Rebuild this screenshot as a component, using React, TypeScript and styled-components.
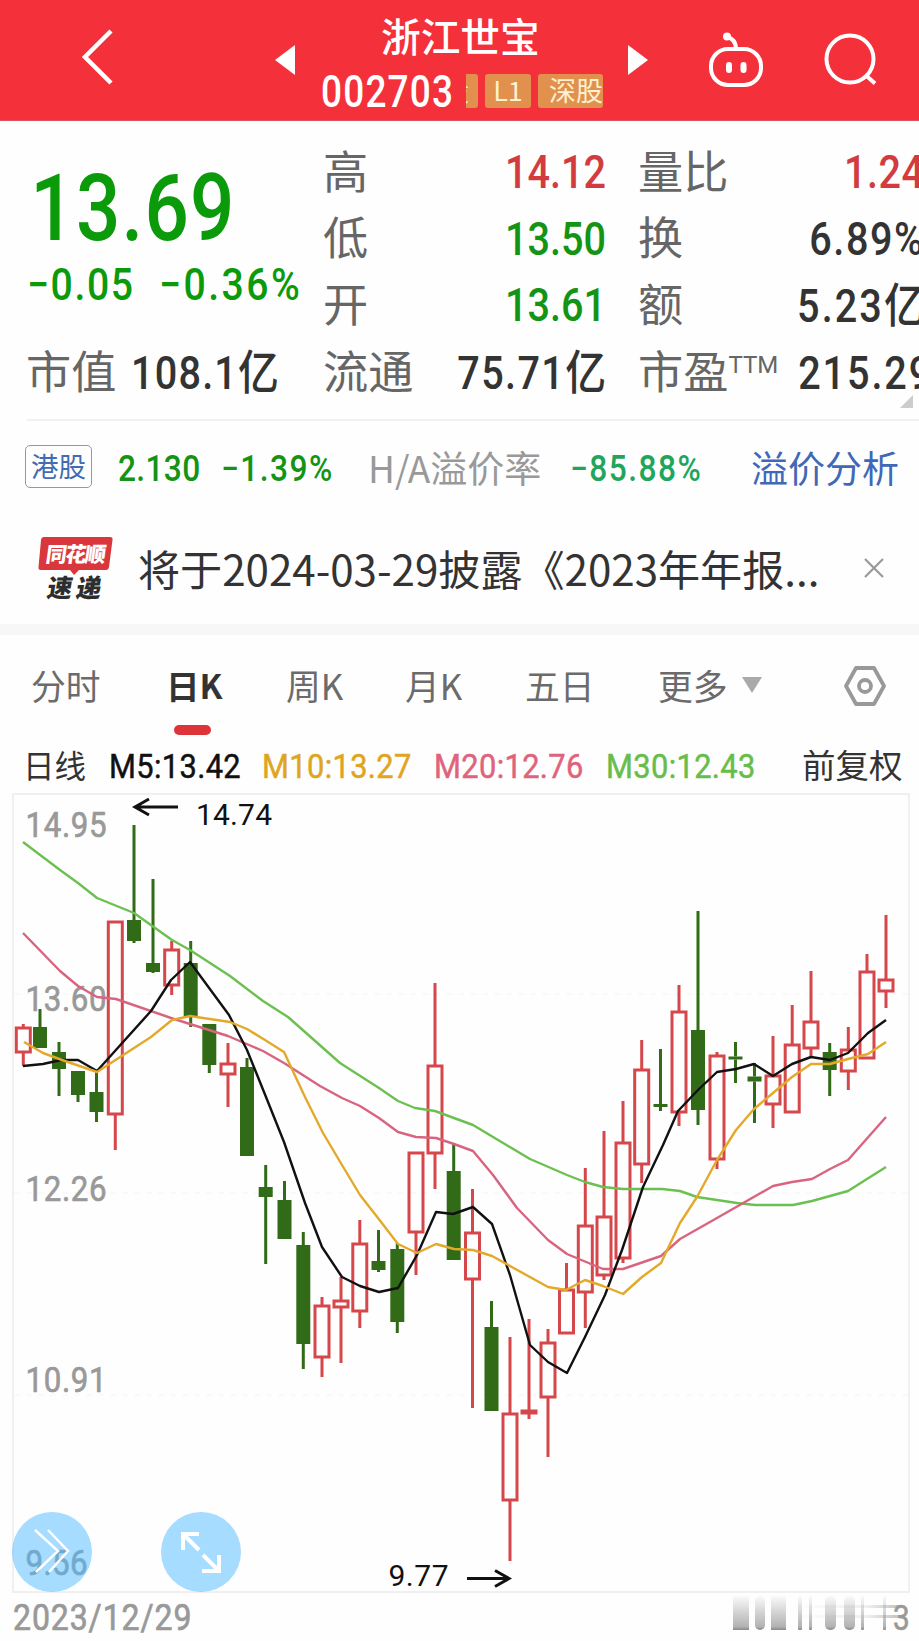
import React from 'react';
import styled, { createGlobalStyle } from 'styled-components';

const GlobalStyle = createGlobalStyle`
  * { box-sizing: border-box; }
  body { margin: 0; background: #fff; overflow: hidden; }
`;

const NUM = `'Roboto', 'Noto Sans CJK SC', sans-serif`;
const CJK = `'Noto Sans CJK SC', sans-serif`;

const Page = styled.main`
  width: 919px;
  height: 1641px;
  overflow: hidden;
  background: #fefefe;
  font-family: ${CJK};
  color: #333;
`;

const Header = styled.header`
  display: flex;
  height: 121px;
  background: #f4303a;
  border-bottom: 1px solid #d9545a;
  color: #fff;
`;
const BackSlot = styled.div`
  width: 275px;
  padding: 29px 0 0 80px;
`;
const ArrowSlot = styled.div<{ $w: number }>`
  width: ${(p) => p.$w}px;
  padding-top: 45px;
`;
const TitleBlock = styled.div`
  width: 333px;
  padding: 11px 0 0 26px;
`;
const Title = styled.h1`
  margin: 0 0 0 60px;
  font: 500 39.7px/48px ${CJK};
  white-space: nowrap;
`;
const CodeRow = styled.div`
  display: flex;
  align-items: center;
  height: 64px;
`;
const Code = styled.span`
  width: 145px;
  padding-top: 3px;
  font: 500 43.5px/60px ${NUM};
  letter-spacing: 1.4px;
  transform: scaleX(0.85);
  transform-origin: left;
`;
const Tag = styled.span<{ $w: number; $cut?: boolean; $align?: string }>`
  width: ${(p) => p.$w}px;
  height: 34px;
  margin-right: 7px;
  background: #e2904e;
  border-radius: ${(p) => (p.$cut ? '0 3px 3px 0' : '3px')};
  color: #fdf1cf;
  font: 400 27px/32px ${CJK};
  text-align: ${(p) => p.$align || 'center'};
  overflow: hidden;
  white-space: nowrap;
  flex: none;
  & > i { display: block; width: 27px; font-style: normal; margin-left: -24px; }
`;
const RobotSlot = styled.div`
  width: 118px;
  padding: 32px 0 0 57px;
`;
const SearchSlot = styled.div`
  padding: 31px 0 0 55px;
`;

const Quote = styled.section`
  display: grid;
  grid-template-columns: 297px 282px 319px;
  grid-template-rows: 67px 66px 67px 68px;
  height: 300px;
  margin-left: 27px;
  padding-top: 15px;
  border-bottom: 2px solid #f1f1f1;
  position: relative;
`;
const PriceBlock = styled.div`
  grid-row: 1 / span 3;
  color: #0a9a0a;
  font-family: ${NUM};
  font-weight: 500;
`;
const Price = styled.div`
  padding: 21px 0 0 4px;
  font-size: 93px;
  line-height: 104px;
  letter-spacing: 1.4px;
  transform: scaleX(0.84);
  transform-origin: left;
`;
const Changes = styled.div`
  display: flex;
  font-size: 44.5px;
  line-height: 48px;
  letter-spacing: 2px;
  white-space: nowrap;
`;
const Change = styled.span<{ $ls?: number }>`
  width: 132px;
  letter-spacing: ${(p) => p.$ls || 1.8}px;
  transform: scaleX(0.88);
  transform-origin: left;
`;
const Cell = styled.div<{ $third?: boolean }>`
  display: flex;
  align-items: center;
  justify-content: space-between;
  white-space: nowrap;
  ${(p) => p.$third && 'margin-left: 33px;'}
`;
const Label = styled.span`
  margin-left: -1px;
  font: 400 45.2px/60px ${CJK};
  color: #666;
  sup { position: relative; top: -16px; font: 400 24px/1 ${NUM}; vertical-align: baseline; letter-spacing: 0; }
`;
const Value = styled.span<{ $c?: string; $left?: boolean; $ls?: number }>`
  padding-top: 7px;
  font: 500 45.5px/60px ${NUM};
  letter-spacing: ${(p) => p.$ls ?? 1.8}px;
  color: ${(p) => p.$c || '#333'};
  transform: scaleX(0.87);
  transform-origin: ${(p) => (p.$left ? 'left' : 'right')};
  em { font-style: normal; font-size: 47px; letter-spacing: 0; }
`;
const FirstCell = styled(Cell)`
  justify-content: flex-start;
  gap: 15px;
`;
const Corner = styled.svg`
  position: absolute;
  right: 6px;
  bottom: 11px;
`;

const HkRow = styled.section`
  display: flex;
  align-items: center;
  height: 91px;
  padding-left: 25px;
  white-space: nowrap;
`;
const HkBadge = styled.span`
  width: 67px;
  height: 43px;
  border: 1.5px solid #7f9cc9;
  border-radius: 5px;
  color: #426bb0;
  font: 400 27.5px/39px ${CJK};
  text-align: center;
`;
const HkNum = styled.span<{ $w: number; $c: string; $ml: number; $ls: number }>`
  width: ${(p) => p.$w}px;
  margin-left: ${(p) => p.$ml}px;
  padding-top: 4px;
  font: 500 36px/50px ${NUM};
  letter-spacing: ${(p) => p.$ls}px;
  color: ${(p) => p.$c};
  transform: scaleX(0.88);
  transform-origin: left;
`;
const HkLabel = styled.span<{ $w: number; $ml: number; $c: string }>`
  width: ${(p) => p.$w}px;
  margin-left: ${(p) => p.$ml}px;
  font: 400 37px/50px ${CJK};
  color: ${(p) => p.$c};
`;

const News = styled.section`
  display: flex;
  align-items: center;
  height: 112px;
  padding-left: 38px;
`;
const NewsText = styled.p`
  width: 690px;
  margin: 0 0 0 24px;
  font: 400 42.1px/60px ${CJK};
  white-space: nowrap;
`;
const CloseIcon = styled.svg`
  margin-left: 36px;
`;
const Gap = styled.div`
  height: 11px;
  background: #f7f7f7;
`;

const Tabs = styled.nav`
  display: flex;
  height: 106px;
  padding: 28px 0 0 31px;
`;
const Tab = styled.div<{ $w: number; $on?: boolean }>`
  width: ${(p) => p.$w}px;
  font: ${(p) => (p.$on ? '700 33.5px' : '400 34.8px')}/44px ${CJK};
  color: ${(p) => (p.$on ? '#333' : '#6b6b6b')};
  white-space: nowrap;
  ${(p) => p.$on && 'text-indent: -2px;'}
  &::after {
    content: '';
    display: ${(p) => (p.$on ? 'block' : 'none')};
    width: 37px;
    height: 10px;
    margin: 18px 0 0 6px;
    border-radius: 5px;
    background: #dc3439;
  }
`;
const Caret = styled.svg`
  margin: 14px 82px 0 0;
`;

const Averages = styled.section`
  display: flex;
  align-items: center;
  height: 52px;
  padding-left: 23px;
  font: 400 31.5px/50px ${CJK};
  white-space: nowrap;
`;
const Word = styled.span<{ $w: number; $s?: number }>`
  width: ${(p) => p.$w}px;
  padding-bottom: 6px;
  font-size: ${(p) => p.$s || 31.5}px;
`;
const Avg = styled.span<{ $w: number; $c: string }>`
  width: ${(p) => p.$w}px;
  font: 400 33.5px/50px ${NUM};
  letter-spacing: 0.4px;
  -webkit-text-stroke: 0.5px ${(p) => p.$c};
  color: ${(p) => p.$c};
  transform: scaleX(0.92);
  transform-origin: left;
`;

const ChartArea = styled.section`
  position: relative;
  height: 800px;
`;
const Chart = styled.svg`
  display: block;
`;
const RoundButton = styled.button<{ $x: number }>`
  position: absolute;
  left: ${(p) => p.$x}px;
  top: 719px;
  width: 80px;
  height: 80px;
  padding: 0;
  border: 0;
  border-radius: 50%;
  background: rgba(75, 185, 255, 0.5);
`;
const Footer = styled.footer`
  display: flex;
  justify-content: space-between;
  height: 48px;
  padding-left: 13px;
  font: 400 36px/50px ${NUM};
  color: #999;
`;
const StartDate = styled.span`
  letter-spacing: 1px;
  -webkit-text-stroke: 0.7px #999;
  transform: scaleX(0.89);
  transform-origin: left;
`;

type Candle = [x: number, top: number, bottom: number, high: number, low: number, up: 0 | 1];
const candles: Candle[] = [
  [23.3, 1028, 1052, 1024, 1066, 1], [40, 1027, 1048, 1009, 1048, 0], [59, 1052, 1069, 1042, 1096, 0],
  [78, 1071, 1095, 1071, 1102, 0], [96.5, 1092, 1112, 1071, 1122, 0], [115.3, 922, 1114, 922, 1150, 1],
  [134, 920, 941, 825, 943, 0], [153, 963, 972, 879, 973, 0], [171.7, 950, 985, 941, 995, 1],
  [190.7, 963, 1017, 941, 1027, 0], [209.3, 1024, 1065, 1024, 1073, 0], [228, 1064, 1074, 1043, 1107, 1],
  [247, 1067, 1156, 1058, 1156, 0], [265.7, 1187, 1197, 1165, 1264, 0], [284.5, 1200, 1239, 1181, 1239, 0],
  [303.3, 1245, 1344, 1232, 1369, 0], [322, 1306, 1357, 1297, 1377, 1], [341, 1301, 1307, 1277, 1363, 1],
  [359.8, 1244, 1311, 1220, 1328, 1], [378.5, 1261, 1270, 1230, 1272, 0], [397.3, 1249, 1322, 1243, 1333, 0],
  [416, 1153, 1232, 1153, 1275, 1], [435, 1066, 1153, 983, 1189, 1], [453.7, 1171, 1260, 1143, 1260, 0],
  [472.5, 1233, 1279, 1189, 1408, 1], [491.5, 1327, 1411, 1301, 1411, 0], [510, 1414, 1500, 1337, 1561, 1],
  [529, 1411, 1413, 1319, 1419, 1], [548, 1343, 1397, 1329, 1457, 1], [566.5, 1290, 1333, 1263, 1333, 1],
  [585.3, 1226, 1292, 1168, 1328, 1], [604, 1217, 1275, 1131, 1280, 1], [623, 1143, 1258, 1101, 1263, 1],
  [641.7, 1070, 1164, 1040, 1183, 1], [660.5, 1104, 1107, 1049, 1111, 0], [679, 1012, 1112, 985, 1126, 1],
  [698, 1030, 1110, 911, 1125, 0], [717, 1056, 1159, 1052, 1169, 1], [735.5, 1056.5, 1059.5, 1042, 1083, 0],
  [754.5, 1076.5, 1081.5, 1063, 1123, 0], [773, 1076, 1104, 1036, 1128, 1], [792.2, 1045, 1112, 1005, 1112, 1],
  [811, 1022, 1048, 971, 1056, 1], [829.7, 1052, 1070, 1043, 1096, 0], [848.3, 1050, 1071, 1027, 1090, 1],
  [867, 972, 1058, 954, 1058, 1], [886, 980, 991, 915, 1008, 1],
];

const averages: { color: string; points: string }[] = [
  { color: '#6cc04f', points: '23,842 60,870 78,883 97,898 134,913 172,940 190,950 230,976 263,1001 288,1017 340,1063 379,1088 398,1101 415,1108 435,1111 473,1125 530,1159 567,1175 585,1182 603,1187 623,1189 662,1189 680,1191 697,1197 737,1203 755,1205 793,1205 812,1201 830,1196 848,1191 886,1167' },
  { color: '#d9647f', points: '23,933 60,971 78,986 97,997 116,999 171,1018 228,1036 263,1051 284,1063 320,1086 342,1098 360,1106 379,1118 398,1132 416,1137 436,1138 454,1144 473,1151 493,1175 517,1208 548,1240 567,1254 603,1269 623,1269 661,1256 680,1239 717,1218 773,1186 792,1182 812,1179 830,1169 848,1160 886,1117' },
  { color: '#111', points: '23,1066 43,1064 61,1060 78,1060 97,1071 151,1011 171,980 190,962 229,1015 247,1050 266,1097 284,1142 305,1203 322,1247 342,1277 360,1286 379,1292 398,1288 417,1255 436,1212 453,1214 473,1207 492,1224 510,1275 530,1345 548,1362 567,1373 585,1337 605,1295 622,1250 643,1187 663,1145 678,1111 698,1090 717,1072 736,1069 754,1064 773,1076 792,1064 811,1057 830,1060 848,1053 868,1033 886,1020' },
  { color: '#e3a92a', points: '24,1042 43,1053 62,1060 97,1072 151,1037 172,1020 190,1016 230,1022 247,1029 265,1040 284,1052 305,1097 323,1133 342,1165 360,1195 378,1218 398,1244 417,1253 436,1244 454,1249 473,1250 492,1256 548,1287 566,1290 585,1280 603,1286 623,1294 642,1277 661,1263 680,1223 697,1197 717,1160 736,1130 754,1109 773,1093 792,1077 811,1064 830,1064 848,1059 868,1054 886,1042' },
];

const axis: [string, number, number][] = [
  ['14.95', 837, 79], ['13.60', 1011, 79], ['12.26', 1201, 79], ['10.91', 1392, 79], ['9.56', 1575, 60],
];

function CandleMark({ c }: { c: Candle }) {
  const [x, t, b, h, l, up] = c;
  const color = up ? '#d5474b' : '#316b18';
  return (
    <g stroke={color} strokeWidth={3}>
      {h < t && <line x1={x} x2={x} y1={h} y2={t} />}
      {l > b && <line x1={x} x2={x} y1={b} y2={l} />}
      {up ? (
        <rect x={x - 7} y={t} width={14} height={b - t} fill="none" />
      ) : (
        <rect x={x - 7} y={t} width={14} height={b - t} fill={color} stroke="none" />
      )}
    </g>
  );
}

function KLine() {
  return (
    <Chart width="919" height="800" viewBox="0 793 919 800">
      <g stroke="#f0f0f0" strokeWidth="2" fill="none">
        <rect x="13" y="794" width="896" height="798" />
        <path d="M14 994H908M14 1193H908M14 1395H908" stroke="#f5f5f5" strokeWidth="1" strokeDasharray="6 6" />
      </g>
      <g fill="#999" fontFamily="Roboto, sans-serif" fontSize="35.500" stroke="#999" strokeWidth=".7">
        {axis.map(([t, y, w]) => (
          <text key={t} transform={`translate(25.500 ${y}) scale(.88 1)`} textLength={(w + 2) / 0.88}>{t}</text>
        ))}
      </g>
      {candles.map((c) => <CandleMark key={c[0]} c={c} />)}
      {averages.map((a) => (
        <polyline key={a.color} points={a.points} fill="none" stroke={a.color} strokeWidth="2.400" strokeLinejoin="round" />
      ))}
      <g fill="none" stroke="#111" strokeWidth="3">
        <path d="M178 807H136M149 799L135 807L149 815" />
        <path d="M467 1578.500H508M495 1570.500L509 1578.500L495 1586.500" />
      </g>
      <g fill="#111" fontFamily="Roboto, sans-serif" fontSize="30">
        <text x="196" y="825" textLength="76">14.74</text>
        <text x="388.500" y="1586" textLength="60">9.77</text>
      </g>
    </Chart>
  );
}

function BrandMark() {
  return (
    <svg width="76" height="66" viewBox="0 0 76 66">
      <path d="M6 2H72Q75 2 74.500 5L71 32Q70.500 35 68 35H41L36 40L32 35H3Q0 35 .5 32L3 5Q3.500 2 6 2Z" fill="#d9373b" />
      <g fontFamily="Noto Sans CJK SC, sans-serif" fontWeight="900" fontSize="21">
        <text transform="translate(7 27) skewX(-8)" fill="#fff" textLength="60">同花顺</text>
        <text transform="translate(8 62) skewX(-10)" fill="#2d2d2d" fontSize="25" textLength="54">速递</text>
      </g>
    </svg>
  );
}

function DateRemnant() {
  const bars: [number, number, number][] = [[33, 16, 0], [55, 10, 5], [71, 15, 0], [98, 4, 1], [109, 3, 1], [125, 11, 5], [144, 11, 5], [161, 3, 1], [183, 3, 1]];
  return (
    <svg width="219" height="48" viewBox="0 0 219 48">
      <defs>
        <linearGradient id="fade" x1="0" y1="0" x2="0" y2="1">
          <stop offset="0" stopColor="#999" stopOpacity="0.04" />
          <stop offset=".9" stopColor="#999" stopOpacity=".75" />
          <stop offset="1" stopColor="#888" />
        </linearGradient>
        <linearGradient id="trail" x1="0" y1="0" x2="1" y2="0">
          <stop offset="0" stopColor="#aaa" stopOpacity="0" />
          <stop offset=".7" stopColor="#999" stopOpacity=".15" />
          <stop offset="1" stopColor="#999" stopOpacity=".6" />
        </linearGradient>
      </defs>
      {bars.map(([x, w, r]) => <rect key={x} x={x} y="3" width={w} height="34" rx={r} fill="url(#fade)" />)}
      <rect x="90" y="12" width="110" height="3" fill="url(#trail)" />
      <rect x="90" y="22" width="110" height="3" fill="url(#trail)" />
      <text transform="translate(193 37) scale(.85 1)" fontFamily="Roboto, sans-serif" fontSize="35" fill="#999" stroke="#999" strokeWidth=".6">3</text>
    </svg>
  );
}

const GREEN = '#149414';
const RED = '#d23c40';

export default function App() {
  return (
    <Page>
      <GlobalStyle />
      <Header>
        <BackSlot>
          <svg width="34" height="58" fill="none" stroke="#fff" strokeWidth="4.500"><path d="M31 2L5 28L31 54" /></svg>
        </BackSlot>
        <ArrowSlot $w={20}><svg width="20" height="30" fill="#fff"><path d="M20 0V30L0 15Z" /></svg></ArrowSlot>
        <TitleBlock>
          <Title>浙江世宝</Title>
          <CodeRow>
            <Code>002703</Code>
            <Tag $w={12} $cut><i>股</i></Tag>
            <Tag $w={46}>L1</Tag>
            <Tag $w={65} $align="right">深股</Tag>
          </CodeRow>
        </TitleBlock>
        <ArrowSlot $w={20}><svg width="20" height="30" fill="#fff"><path d="M0 0V30L20 15Z" /></svg></ArrowSlot>
        <RobotSlot>
          <svg width="60" height="58" viewBox="705 33 60 58" fill="none" stroke="#fff" strokeWidth="4">
            <rect x="711" y="50" width="50" height="36" rx="17" />
            <path d="M736 50Q736 40 727 38" strokeWidth="4" /><circle cx="727" cy="37.500" r="2" fill="#fff" />
            <path d="M729 66V71M743.500 66V71" strokeWidth="6" strokeLinecap="round" />
          </svg>
        </RobotSlot>
        <SearchSlot>
          <svg width="60" height="58" viewBox="821 31 60 58" fill="none" stroke="#fff" strokeWidth="4">
            <circle cx="850" cy="59" r="23.500" /><path d="M865 74.500L875 83.500" />
          </svg>
        </SearchSlot>
      </Header>

      <Quote>
        <PriceBlock>
          <Price>13.69</Price>
          <Changes><Change>−0.05</Change><Change $ls={2.8}>−0.36%</Change></Changes>
        </PriceBlock>
        <Cell><Label>高</Label><Value $c={RED} $ls={0}>14.12</Value></Cell>
        <Cell $third><Label>量比</Label><Value $c={RED} $ls={0.6}>1.24</Value></Cell>
        <Cell><Label>低</Label><Value $c={GREEN} $ls={0}>13.50</Value></Cell>
        <Cell $third><Label>换</Label><Value>6.89%</Value></Cell>
        <Cell><Label>开</Label><Value $c={GREEN} $ls={0}>13.61</Value></Cell>
        <Cell $third><Label>额</Label><Value $ls={2.4}>5.23<em>亿</em></Value></Cell>
        <FirstCell><Label>市值</Label><Value $left $ls={1.4}>108.1<em>亿</em></Value></FirstCell>
        <Cell><Label>流通</Label><Value $ls={1.6}>75.71<em>亿</em></Value></Cell>
        <Cell $third><Label>市盈<sup>TTM</sup></Label><Value $ls={2.2}>215.29</Value></Cell>
        <Corner width="13" height="13" fill="#ccc"><path d="M13 0V13H0Z" /></Corner>
      </Quote>

      <HkRow>
        <HkBadge>港股</HkBadge>
        <HkNum $w={90} $ml={26} $ls={0.4} $c="#149414">2.130</HkNum>
        <HkNum $w={120} $ml={13} $ls={1.7} $c="#149414">−1.39%</HkNum>
        <HkLabel $w={180} $ml={27} $c="#999">H/A溢价率</HkLabel>
        <HkNum $w={140} $ml={22} $ls={1.7} $c="#1fa65c">−85.88%</HkNum>
        <HkLabel $w={150} $ml={41} $c="#3f68b8">溢价分析</HkLabel>
      </HkRow>

      <News>
        <BrandMark />
        <NewsText>将于2024-03-29披露《2023年年报...</NewsText>
        <CloseIcon width="20" height="20" stroke="#999" strokeWidth="2.200"><path d="M1 1L19 19M19 1L1 19" /></CloseIcon>
      </News>
      <Gap />

      <Tabs>
        <Tab $w={137}>分时</Tab>
        <Tab $w={118} $on>日K</Tab>
        <Tab $w={119}>周K</Tab>
        <Tab $w={120}>月K</Tab>
        <Tab $w={133}>五日</Tab>
        <Tab $w={84}>更多</Tab>
        <Caret width="20" height="16" fill="#aaa"><path d="M0 0H20L10 16Z" /></Caret>
        <svg width="44" height="46" viewBox="0 0 44 46" fill="none" stroke="#999" strokeWidth="3.800" strokeLinejoin="round">
          <path d="M12 5H30L40 23L30 41H12L2 23Z" /><circle cx="21" cy="23" r="6" />
        </svg>
      </Tabs>

      <Averages>
        <Word $w={86}>日线</Word>
        <Avg $w={153} $c="#111">M5:13.42</Avg>
        <Avg $w={172} $c="#dfa51f">M10:13.27</Avg>
        <Avg $w={172} $c="#e0637c">M20:12.76</Avg>
        <Avg $w={196} $c="#67bd4c">M30:12.43</Avg>
        <Word $w={110} $s={33.5}>前复权</Word>
      </Averages>

      <ChartArea>
        <KLine />
        <RoundButton $x={12}>
          <svg width="80" height="80" fill="none" stroke="#fff" strokeWidth="2.500">
            <path d="M23 18L46 39L24 60M36 18L56 39L37 60" />
          </svg>
        </RoundButton>
        <RoundButton $x={160.5}>
          <svg width="80" height="80" fill="none" stroke="#fff" strokeWidth="4">
            <path d="M38 38L22 22M22 38V22H38M42 43L58 59M58 43V59H41" />
          </svg>
        </RoundButton>
      </ChartArea>

      <Footer>
        <StartDate>2023/12/29</StartDate>
        <DateRemnant />
      </Footer>
    </Page>
  );
}
